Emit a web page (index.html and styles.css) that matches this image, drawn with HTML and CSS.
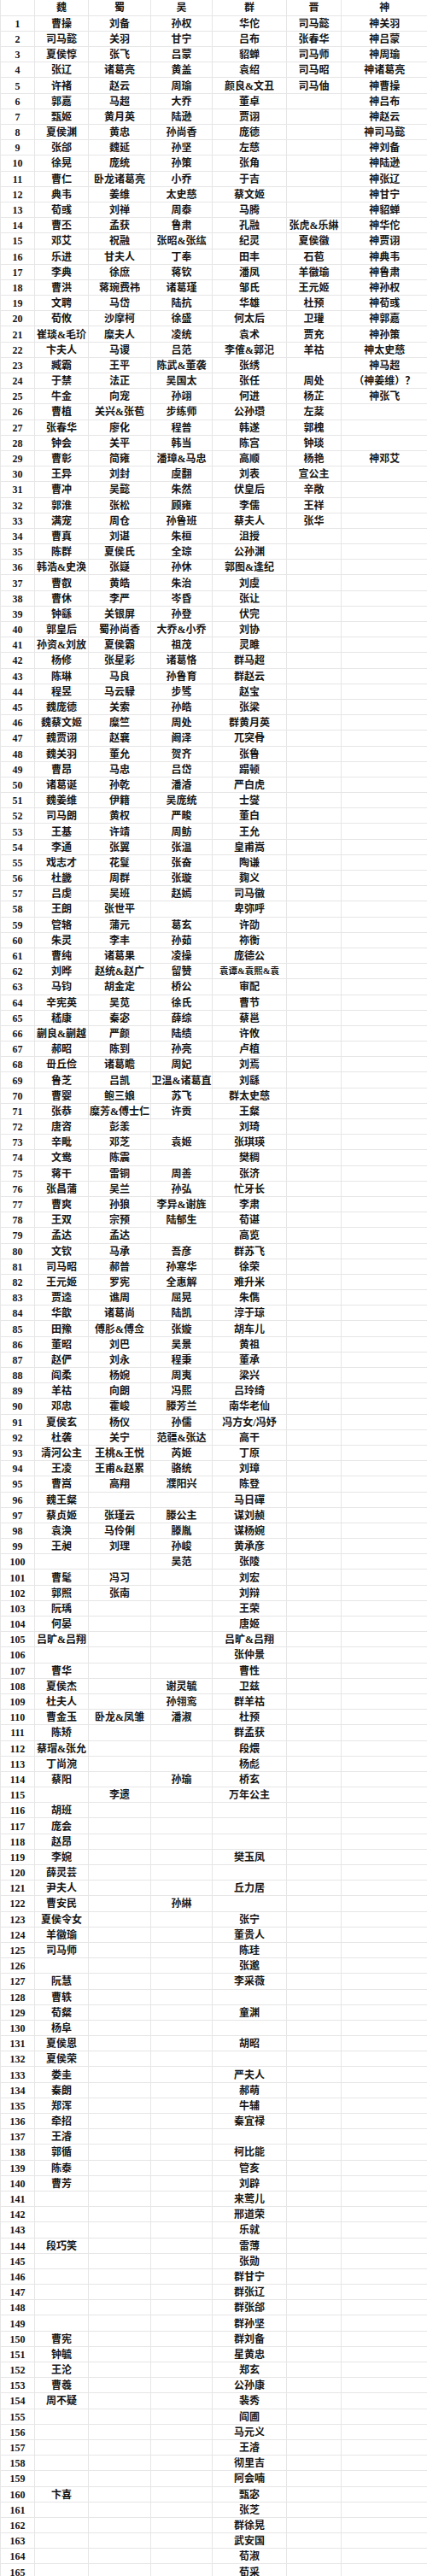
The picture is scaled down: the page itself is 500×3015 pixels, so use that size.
FILE: index.html
```html
<!DOCTYPE html>
<html lang="zh-CN">
<head>
<meta charset="utf-8">
<title>三国杀武将列表</title>
<link rel="stylesheet" href="styles.css">
</head>
<body>
<table class="roster">
<colgroup><col class="c-idx"><col class="c-wei"><col class="c-shu"><col class="c-wu"><col class="c-qun"><col class="c-jin"><col class="c-shen"></colgroup>
<thead>
<tr><th></th><th>魏</th><th>蜀</th><th>吴</th><th>群</th><th>晋</th><th>神</th></tr>
</thead>
<tbody>
<tr><td>1</td><td>曹操</td><td>刘备</td><td>孙权</td><td>华佗</td><td>司马懿</td><td>神关羽</td></tr>
<tr><td>2</td><td>司马懿</td><td>关羽</td><td>甘宁</td><td>吕布</td><td>张春华</td><td>神吕蒙</td></tr>
<tr><td>3</td><td>夏侯惇</td><td>张飞</td><td>吕蒙</td><td>貂蝉</td><td>司马师</td><td>神周瑜</td></tr>
<tr><td>4</td><td>张辽</td><td>诸葛亮</td><td>黄盖</td><td>袁绍</td><td>司马昭</td><td>神诸葛亮</td></tr>
<tr><td>5</td><td>许褚</td><td>赵云</td><td>周瑜</td><td>颜良&amp;文丑</td><td>司马伷</td><td>神曹操</td></tr>
<tr><td>6</td><td>郭嘉</td><td>马超</td><td>大乔</td><td>董卓</td><td></td><td>神吕布</td></tr>
<tr><td>7</td><td>甄姬</td><td>黄月英</td><td>陆逊</td><td>贾诩</td><td></td><td>神赵云</td></tr>
<tr><td>8</td><td>夏侯渊</td><td>黄忠</td><td>孙尚香</td><td>庞德</td><td></td><td>神司马懿</td></tr>
<tr><td>9</td><td>张郃</td><td>魏延</td><td>孙坚</td><td>左慈</td><td></td><td>神刘备</td></tr>
<tr><td>10</td><td>徐晃</td><td>庞统</td><td>孙策</td><td>张角</td><td></td><td>神陆逊</td></tr>
<tr><td>11</td><td>曹仁</td><td>卧龙诸葛亮</td><td>小乔</td><td>于吉</td><td></td><td>神张辽</td></tr>
<tr><td>12</td><td>典韦</td><td>姜维</td><td>太史慈</td><td>蔡文姬</td><td></td><td>神甘宁</td></tr>
<tr><td>13</td><td>荀彧</td><td>刘禅</td><td>周泰</td><td>马腾</td><td></td><td>神貂蝉</td></tr>
<tr><td>14</td><td>曹丕</td><td>孟获</td><td>鲁肃</td><td>孔融</td><td>张虎&amp;乐綝</td><td>神华佗</td></tr>
<tr><td>15</td><td>邓艾</td><td>祝融</td><td>张昭&amp;张纮</td><td>纪灵</td><td>夏侯徽</td><td>神贾诩</td></tr>
<tr><td>16</td><td>乐进</td><td>甘夫人</td><td>丁奉</td><td>田丰</td><td>石苞</td><td>神典韦</td></tr>
<tr><td>17</td><td>李典</td><td>徐庶</td><td>蒋钦</td><td>潘凤</td><td>羊徽瑜</td><td>神鲁肃</td></tr>
<tr><td>18</td><td>曹洪</td><td>蒋琬费祎</td><td>诸葛瑾</td><td>邹氏</td><td>王元姬</td><td>神孙权</td></tr>
<tr><td>19</td><td>文聘</td><td>马岱</td><td>陆抗</td><td>华雄</td><td>杜预</td><td>神荀彧</td></tr>
<tr><td>20</td><td>荀攸</td><td>沙摩柯</td><td>徐盛</td><td>何太后</td><td>卫瓘</td><td>神郭嘉</td></tr>
<tr><td>21</td><td>崔琰&amp;毛玠</td><td>糜夫人</td><td>凌统</td><td>袁术</td><td>贾充</td><td>神孙策</td></tr>
<tr><td>22</td><td>卞夫人</td><td>马谡</td><td>吕范</td><td>李傕&amp;郭汜</td><td>羊祜</td><td>神太史慈</td></tr>
<tr><td>23</td><td>臧霸</td><td>王平</td><td>陈武&amp;董袭</td><td>张绣</td><td></td><td>神马超</td></tr>
<tr><td>24</td><td>于禁</td><td>法正</td><td>吴国太</td><td>张任</td><td>周处</td><td>（神姜维）？</td></tr>
<tr><td>25</td><td>牛金</td><td>向宠</td><td>孙翊</td><td>何进</td><td>杨芷</td><td>神张飞</td></tr>
<tr><td>26</td><td>曹植</td><td>关兴&amp;张苞</td><td>步练师</td><td>公孙瓒</td><td>左棻</td><td></td></tr>
<tr><td>27</td><td>张春华</td><td>廖化</td><td>程普</td><td>韩遂</td><td>郭槐</td><td></td></tr>
<tr><td>28</td><td>钟会</td><td>关平</td><td>韩当</td><td>陈宫</td><td>钟琰</td><td></td></tr>
<tr><td>29</td><td>曹彰</td><td>简雍</td><td>潘璋&amp;马忠</td><td>高顺</td><td>杨艳</td><td>神邓艾</td></tr>
<tr><td>30</td><td>王异</td><td>刘封</td><td>虞翻</td><td>刘表</td><td>宣公主</td><td></td></tr>
<tr><td>31</td><td>曹冲</td><td>吴懿</td><td>朱然</td><td>伏皇后</td><td>辛敞</td><td></td></tr>
<tr><td>32</td><td>郭淮</td><td>张松</td><td>顾雍</td><td>李儒</td><td>王祥</td><td></td></tr>
<tr><td>33</td><td>满宠</td><td>周仓</td><td>孙鲁班</td><td>蔡夫人</td><td>张华</td><td></td></tr>
<tr><td>34</td><td>曹真</td><td>刘谌</td><td>朱桓</td><td>沮授</td><td></td><td></td></tr>
<tr><td>35</td><td>陈群</td><td>夏侯氏</td><td>全琮</td><td>公孙渊</td><td></td><td></td></tr>
<tr><td>36</td><td>韩浩&amp;史涣</td><td>张嶷</td><td>孙休</td><td>郭图&amp;逢纪</td><td></td><td></td></tr>
<tr><td>37</td><td>曹叡</td><td>黄皓</td><td>朱治</td><td>刘虞</td><td></td><td></td></tr>
<tr><td>38</td><td>曹休</td><td>李严</td><td>岑昏</td><td>张让</td><td></td><td></td></tr>
<tr><td>39</td><td>钟繇</td><td>关银屏</td><td>孙登</td><td>伏完</td><td></td><td></td></tr>
<tr><td>40</td><td>郭皇后</td><td>蜀孙尚香</td><td>大乔&amp;小乔</td><td>刘协</td><td></td><td></td></tr>
<tr><td>41</td><td>孙资&amp;刘放</td><td>夏侯霸</td><td>祖茂</td><td>灵雎</td><td></td><td></td></tr>
<tr><td>42</td><td>杨修</td><td>张星彩</td><td>诸葛恪</td><td>群马超</td><td></td><td></td></tr>
<tr><td>43</td><td>陈琳</td><td>马良</td><td>孙鲁育</td><td>群赵云</td><td></td><td></td></tr>
<tr><td>44</td><td>程昱</td><td>马云騄</td><td>步骘</td><td>赵宝</td><td></td><td></td></tr>
<tr><td>45</td><td>魏庞德</td><td>关索</td><td>孙皓</td><td>张梁</td><td></td><td></td></tr>
<tr><td>46</td><td>魏蔡文姬</td><td>糜竺</td><td>周处</td><td>群黄月英</td><td></td><td></td></tr>
<tr><td>47</td><td>魏贾诩</td><td>赵襄</td><td>阚泽</td><td>兀突骨</td><td></td><td></td></tr>
<tr><td>48</td><td>魏关羽</td><td>董允</td><td>贺齐</td><td>张鲁</td><td></td><td></td></tr>
<tr><td>49</td><td>曹昂</td><td>马忠</td><td>吕岱</td><td>蹋顿</td><td></td><td></td></tr>
<tr><td>50</td><td>诸葛诞</td><td>孙乾</td><td>潘濬</td><td>严白虎</td><td></td><td></td></tr>
<tr><td>51</td><td>魏姜维</td><td>伊籍</td><td>吴庞统</td><td>士燮</td><td></td><td></td></tr>
<tr><td>52</td><td>司马朗</td><td>黄权</td><td>严畯</td><td>董白</td><td></td><td></td></tr>
<tr><td>53</td><td>王基</td><td>许靖</td><td>周鲂</td><td>王允</td><td></td><td></td></tr>
<tr><td>54</td><td>李通</td><td>张翼</td><td>张温</td><td>皇甫嵩</td><td></td><td></td></tr>
<tr><td>55</td><td>戏志才</td><td>花鬘</td><td>张奋</td><td>陶谦</td><td></td><td></td></tr>
<tr><td>56</td><td>杜畿</td><td>周群</td><td>张璇</td><td>麹义</td><td></td><td></td></tr>
<tr><td>57</td><td>吕虔</td><td>吴班</td><td>赵嫣</td><td>司马徽</td><td></td><td></td></tr>
<tr><td>58</td><td>王朗</td><td>张世平</td><td></td><td>卑弥呼</td><td></td><td></td></tr>
<tr><td>59</td><td>管辂</td><td>蒲元</td><td>葛玄</td><td>许劭</td><td></td><td></td></tr>
<tr><td>60</td><td>朱灵</td><td>李丰</td><td>孙茹</td><td>祢衡</td><td></td><td></td></tr>
<tr><td>61</td><td>曹纯</td><td>诸葛果</td><td>凌操</td><td>庞德公</td><td></td><td></td></tr>
<tr><td>62</td><td>刘晔</td><td>赵统&amp;赵广</td><td>留赞</td><td class="squeeze">袁谭&amp;袁熙&amp;袁</td><td></td><td></td></tr>
<tr><td>63</td><td>马钧</td><td>胡金定</td><td>桥公</td><td>审配</td><td></td><td></td></tr>
<tr><td>64</td><td>辛宪英</td><td>吴苋</td><td>徐氏</td><td>曹节</td><td></td><td></td></tr>
<tr><td>65</td><td>嵇康</td><td>秦宓</td><td>薛综</td><td>蔡邕</td><td></td><td></td></tr>
<tr><td>66</td><td>蒯良&amp;蒯越</td><td>严颜</td><td>陆绩</td><td>许攸</td><td></td><td></td></tr>
<tr><td>67</td><td>郝昭</td><td>陈到</td><td>孙亮</td><td>卢植</td><td></td><td></td></tr>
<tr><td>68</td><td>毌丘俭</td><td>诸葛瞻</td><td>周妃</td><td>刘焉</td><td></td><td></td></tr>
<tr><td>69</td><td>鲁芝</td><td>吕凯</td><td>卫温&amp;诸葛直</td><td>刘繇</td><td></td><td></td></tr>
<tr><td>70</td><td>曹婴</td><td>鲍三娘</td><td>苏飞</td><td>群太史慈</td><td></td><td></td></tr>
<tr><td>71</td><td>张恭</td><td>糜芳&amp;傅士仁</td><td>许贡</td><td>王粲</td><td></td><td></td></tr>
<tr><td>72</td><td>唐咨</td><td>彭羕</td><td></td><td>刘琦</td><td></td><td></td></tr>
<tr><td>73</td><td>辛毗</td><td>邓芝</td><td>袁姬</td><td>张琪瑛</td><td></td><td></td></tr>
<tr><td>74</td><td>文鸯</td><td>陈震</td><td></td><td>樊稠</td><td></td><td></td></tr>
<tr><td>75</td><td>蒋干</td><td>雷铜</td><td>周善</td><td>张济</td><td></td><td></td></tr>
<tr><td>76</td><td>张昌蒲</td><td>吴兰</td><td>孙弘</td><td>忙牙长</td><td></td><td></td></tr>
<tr><td>77</td><td>曹爽</td><td>孙狼</td><td>李异&amp;谢旌</td><td>李肃</td><td></td><td></td></tr>
<tr><td>78</td><td>王双</td><td>宗预</td><td>陆郁生</td><td>荀谌</td><td></td><td></td></tr>
<tr><td>79</td><td>孟达</td><td>孟达</td><td></td><td>高览</td><td></td><td></td></tr>
<tr><td>80</td><td>文钦</td><td>马承</td><td>吾彦</td><td>群苏飞</td><td></td><td></td></tr>
<tr><td>81</td><td>司马昭</td><td>郝普</td><td>孙寒华</td><td>徐荣</td><td></td><td></td></tr>
<tr><td>82</td><td>王元姬</td><td>罗宪</td><td>全惠解</td><td>难升米</td><td></td><td></td></tr>
<tr><td>83</td><td>贾逵</td><td>谯周</td><td>屈晃</td><td>朱儁</td><td></td><td></td></tr>
<tr><td>84</td><td>华歆</td><td>诸葛尚</td><td>陆凯</td><td>淳于琼</td><td></td><td></td></tr>
<tr><td>85</td><td>田豫</td><td>傅肜&amp;傅佥</td><td>张嫙</td><td>胡车儿</td><td></td><td></td></tr>
<tr><td>86</td><td>董昭</td><td>刘巴</td><td>吴景</td><td>黄祖</td><td></td><td></td></tr>
<tr><td>87</td><td>赵俨</td><td>刘永</td><td>程秉</td><td>董承</td><td></td><td></td></tr>
<tr><td>88</td><td>阎柔</td><td>杨婉</td><td>周夷</td><td>梁兴</td><td></td><td></td></tr>
<tr><td>89</td><td>羊祜</td><td>向朗</td><td>冯熙</td><td>吕玲绮</td><td></td><td></td></tr>
<tr><td>90</td><td>邓忠</td><td>霍峻</td><td>滕芳兰</td><td>南华老仙</td><td></td><td></td></tr>
<tr><td>91</td><td>夏侯玄</td><td>杨仪</td><td>孙儒</td><td>冯方女/冯妤</td><td></td><td></td></tr>
<tr><td>92</td><td>杜袭</td><td>关宁</td><td>范疆&amp;张达</td><td>高干</td><td></td><td></td></tr>
<tr><td>93</td><td>清河公主</td><td>王桃&amp;王悦</td><td>芮姬</td><td>丁原</td><td></td><td></td></tr>
<tr><td>94</td><td>王凌</td><td>王甫&amp;赵累</td><td>骆统</td><td>刘璋</td><td></td><td></td></tr>
<tr><td>95</td><td>曹嵩</td><td>高翔</td><td>濮阳兴</td><td>陈登</td><td></td><td></td></tr>
<tr><td>96</td><td>魏王粲</td><td></td><td></td><td>马日磾</td><td></td><td></td></tr>
<tr><td>97</td><td>蔡贞姬</td><td>张瑾云</td><td>滕公主</td><td>谋刘赪</td><td></td><td></td></tr>
<tr><td>98</td><td>袁涣</td><td>马伶俐</td><td>滕胤</td><td>谋杨婉</td><td></td><td></td></tr>
<tr><td>99</td><td>王昶</td><td>刘理</td><td>孙峻</td><td>黄承彦</td><td></td><td></td></tr>
<tr><td>100</td><td></td><td></td><td>吴范</td><td>张陵</td><td></td><td></td></tr>
<tr><td>101</td><td>曹髦</td><td>冯习</td><td></td><td>刘宏</td><td></td><td></td></tr>
<tr><td>102</td><td>郭照</td><td>张南</td><td></td><td>刘辩</td><td></td><td></td></tr>
<tr><td>103</td><td>阮瑀</td><td></td><td></td><td>王荣</td><td></td><td></td></tr>
<tr><td>104</td><td>何晏</td><td></td><td></td><td>唐姬</td><td></td><td></td></tr>
<tr><td>105</td><td>吕旷&amp;吕翔</td><td></td><td></td><td>吕旷&amp;吕翔</td><td></td><td></td></tr>
<tr><td>106</td><td></td><td></td><td></td><td>张仲景</td><td></td><td></td></tr>
<tr><td>107</td><td>曹华</td><td></td><td></td><td>曹性</td><td></td><td></td></tr>
<tr><td>108</td><td>夏侯杰</td><td></td><td>谢灵毓</td><td>卫兹</td><td></td><td></td></tr>
<tr><td>109</td><td>杜夫人</td><td></td><td>孙翎鸾</td><td>群羊祜</td><td></td><td></td></tr>
<tr><td>110</td><td>曹金玉</td><td>卧龙&amp;凤雏</td><td>潘淑</td><td>杜预</td><td></td><td></td></tr>
<tr><td>111</td><td>陈矫</td><td></td><td></td><td>群孟获</td><td></td><td></td></tr>
<tr><td>112</td><td>蔡瑁&amp;张允</td><td></td><td></td><td>段煨</td><td></td><td></td></tr>
<tr><td>113</td><td>丁尚涴</td><td></td><td></td><td>杨彪</td><td></td><td></td></tr>
<tr><td>114</td><td>蔡阳</td><td></td><td>孙瑜</td><td>桥玄</td><td></td><td></td></tr>
<tr><td>115</td><td></td><td>李遗</td><td></td><td>万年公主</td><td></td><td></td></tr>
<tr><td>116</td><td>胡班</td><td></td><td></td><td></td><td></td><td></td></tr>
<tr><td>117</td><td>庞会</td><td></td><td></td><td></td><td></td><td></td></tr>
<tr><td>118</td><td>赵昂</td><td></td><td></td><td></td><td></td><td></td></tr>
<tr><td>119</td><td>李婉</td><td></td><td></td><td>樊玉凤</td><td></td><td></td></tr>
<tr><td>120</td><td>薛灵芸</td><td></td><td></td><td></td><td></td><td></td></tr>
<tr><td>121</td><td>尹夫人</td><td></td><td></td><td>丘力居</td><td></td><td></td></tr>
<tr><td>122</td><td>曹安民</td><td></td><td>孙綝</td><td></td><td></td><td></td></tr>
<tr><td>123</td><td>夏侯令女</td><td></td><td></td><td>张宁</td><td></td><td></td></tr>
<tr><td>124</td><td>羊徽瑜</td><td></td><td></td><td>董贵人</td><td></td><td></td></tr>
<tr><td>125</td><td>司马师</td><td></td><td></td><td>陈珪</td><td></td><td></td></tr>
<tr><td>126</td><td></td><td></td><td></td><td>张邈</td><td></td><td></td></tr>
<tr><td>127</td><td>阮慧</td><td></td><td></td><td>李采薇</td><td></td><td></td></tr>
<tr><td>128</td><td>曹轶</td><td></td><td></td><td></td><td></td><td></td></tr>
<tr><td>129</td><td>荀粲</td><td></td><td></td><td>童渊</td><td></td><td></td></tr>
<tr><td>130</td><td>杨阜</td><td></td><td></td><td></td><td></td><td></td></tr>
<tr><td>131</td><td>夏侯恩</td><td></td><td></td><td>胡昭</td><td></td><td></td></tr>
<tr><td>132</td><td>夏侯荣</td><td></td><td></td><td></td><td></td><td></td></tr>
<tr><td>133</td><td>娄圭</td><td></td><td></td><td>严夫人</td><td></td><td></td></tr>
<tr><td>134</td><td>秦朗</td><td></td><td></td><td>郝萌</td><td></td><td></td></tr>
<tr><td>135</td><td>郑浑</td><td></td><td></td><td>牛辅</td><td></td><td></td></tr>
<tr><td>136</td><td>牵招</td><td></td><td></td><td>秦宜禄</td><td></td><td></td></tr>
<tr><td>137</td><td>王濬</td><td></td><td></td><td></td><td></td><td></td></tr>
<tr><td>138</td><td>郭循</td><td></td><td></td><td>柯比能</td><td></td><td></td></tr>
<tr><td>139</td><td>陈泰</td><td></td><td></td><td>管亥</td><td></td><td></td></tr>
<tr><td>140</td><td>曹芳</td><td></td><td></td><td>刘辟</td><td></td><td></td></tr>
<tr><td>141</td><td></td><td></td><td></td><td>来莺儿</td><td></td><td></td></tr>
<tr><td>142</td><td></td><td></td><td></td><td>邢道荣</td><td></td><td></td></tr>
<tr><td>143</td><td></td><td></td><td></td><td>乐就</td><td></td><td></td></tr>
<tr><td>144</td><td>段巧笑</td><td></td><td></td><td>雷薄</td><td></td><td></td></tr>
<tr><td>145</td><td></td><td></td><td></td><td>张勋</td><td></td><td></td></tr>
<tr><td>146</td><td></td><td></td><td></td><td>群甘宁</td><td></td><td></td></tr>
<tr><td>147</td><td></td><td></td><td></td><td>群张辽</td><td></td><td></td></tr>
<tr><td>148</td><td></td><td></td><td></td><td>群张郃</td><td></td><td></td></tr>
<tr><td>149</td><td></td><td></td><td></td><td>群孙坚</td><td></td><td></td></tr>
<tr><td>150</td><td>曹宪</td><td></td><td></td><td>群刘备</td><td></td><td></td></tr>
<tr><td>151</td><td>钟毓</td><td></td><td></td><td>星黄忠</td><td></td><td></td></tr>
<tr><td>152</td><td>王沦</td><td></td><td></td><td>郑玄</td><td></td><td></td></tr>
<tr><td>153</td><td>曹羲</td><td></td><td></td><td>公孙康</td><td></td><td></td></tr>
<tr><td>154</td><td>周不疑</td><td></td><td></td><td>裴秀</td><td></td><td></td></tr>
<tr><td>155</td><td></td><td></td><td></td><td>阎圃</td><td></td><td></td></tr>
<tr><td>156</td><td></td><td></td><td></td><td>马元义</td><td></td><td></td></tr>
<tr><td>157</td><td></td><td></td><td></td><td>王濬</td><td></td><td></td></tr>
<tr><td>158</td><td></td><td></td><td></td><td>彻里吉</td><td></td><td></td></tr>
<tr><td>159</td><td></td><td></td><td></td><td>阿会喃</td><td></td><td></td></tr>
<tr><td>160</td><td>卞喜</td><td></td><td></td><td>甄宓</td><td></td><td></td></tr>
<tr><td>161</td><td></td><td></td><td></td><td>张芝</td><td></td><td></td></tr>
<tr><td>162</td><td></td><td></td><td></td><td>群徐晃</td><td></td><td></td></tr>
<tr><td>163</td><td></td><td></td><td></td><td>武安国</td><td></td><td></td></tr>
<tr><td>164</td><td></td><td></td><td></td><td>荀淑</td><td></td><td></td></tr>
<tr><td>165</td><td></td><td></td><td></td><td>荀采</td><td></td><td></td></tr>
</tbody>
</table>
</body>
</html>
```

FILE: styles.css
```css
html, body {
  margin: 0;
  padding: 0;
  background: #ffffff;
}

.roster {
  width: 500px;
  table-layout: fixed;
  border-collapse: collapse;
  font-family: "Liberation Serif", "Noto Sans CJK SC", serif;
  font-weight: 700;
  font-size: 12px;
  color: #151515;
}

.c-idx { width: 40px; }
.c-wei { width: 63px; }
.c-shu { width: 73px; }
.c-wu { width: 72px; }
.c-qun { width: 87px; }
.c-jin { width: 64px; }
.c-shen { width: 101px; }

.roster tr {
  height: 18.2px;
}

.roster th,
.roster td {
  padding: 0;
  padding-top: 1px;
  text-align: center;
  vertical-align: middle;
  line-height: 12px;
  white-space: nowrap;
  overflow: hidden;
  font-weight: 700;
  border: 1px solid #e6e6e6;
}

.roster th {
  border-top: none;
}

.roster th:last-child,
.roster td:last-child {
  border-right: none;
}

.roster .squeeze {
  font-size: 10.5px;
}
```
